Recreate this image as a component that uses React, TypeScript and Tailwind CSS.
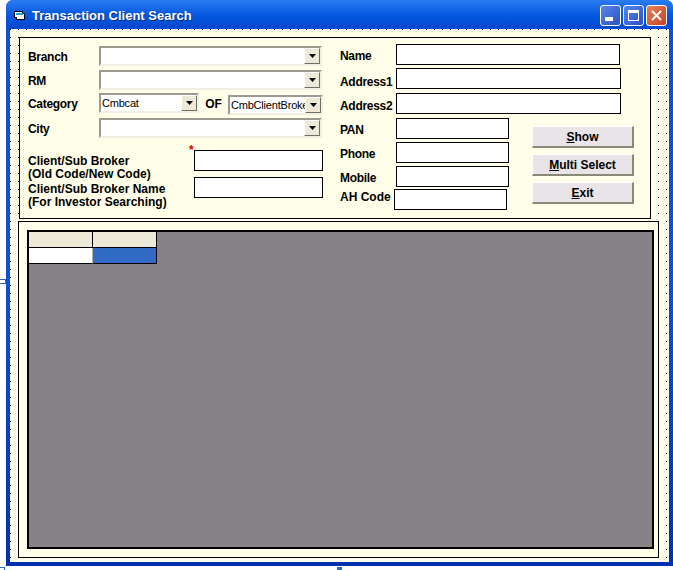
const font = "font-['Liberation_Sans',sans-serif]";

const Combo = ({ className, text }: { className: string; text?: string }) => (
  <div className={`${className} h-[20px] shrink-0 flex items-center bg-white border-2 border-t-[#9c9a8e] border-l-[#9c9a8e] border-r-[#f1efe2] border-b-[#f1efe2] overflow-hidden`}>
    <span className="flex-1 min-w-0 pl-[1px] text-[11px] tracking-[-0.2px] leading-none whitespace-nowrap overflow-hidden text-black">{text}</span>
    <div className="w-[16px] h-[16px] shrink-0 flex items-center justify-center bg-[#ece9d8] border border-t-white border-l-white border-r-[#716f64] border-b-[#716f64]">
      <svg width="7" height="4" viewBox="0 0 7 4">
        <path d="M0 0h7L3.5 4z" fill="#000" />
      </svg>
    </div>
  </div>
);

const Field = ({ className = "w-[113px]" }: { className?: string }) => (
  <div className={`${className} h-[21px] shrink-0 bg-white border border-black`} />
);

const Label = ({ children, className = "" }: { children: React.ReactNode; className?: string }) => (
  <div className={`text-[12px] leading-[14px] font-bold text-black whitespace-nowrap ${className}`}>{children}</div>
);

const FormButton = ({ hot, rest }: { hot: string; rest: string }) => (
  <button className="w-[102px] h-[22px] pt-[1px] bg-[#e8e4e8] border border-t-white border-l-white border-r-2 border-b-2 border-r-[#8a8878] border-b-[#8a8878] text-[12px] font-bold text-black leading-none">
    <span className="underline">{hot}</span>
    {rest}
  </button>
);

export default function App() {
  return (
    <div className={`${font} relative w-[673px] h-[570px] bg-white overflow-hidden`}>
      <div className="w-[667px] h-[566px] ml-[6px] flex flex-col rounded-t-[7px] overflow-hidden bg-gradient-to-b from-[#0a50d8] via-[#0a50d8] to-[#0030b0]">
        {/* title bar */}
        <div className="h-[29px] shrink-0 flex items-center pl-[8px] pr-[6px] pt-[1px] bg-gradient-to-b from-[#2a7cf0] via-[#0558e0] to-[#0348d0]">
          <svg width="12" height="12" viewBox="0 0 12 12" className="shrink-0 mt-[1px]">
            <path d="M.5 1.5h8v2h2v6h-8v-2h-2z" fill="#fff" stroke="#000" strokeWidth="1" />
            <path d="M2 3h7v2H2z" fill="#19a7c9" />
          </svg>
          <span className="ml-[6px] mt-[2px] text-[13px] font-bold text-white [text-shadow:1px_1px_0_#0a2a80]">Transaction Client Search</span>
          <div className="ml-auto flex gap-[2px]">
            <div className="w-[21px] h-[21px] rounded-[3px] border border-white bg-gradient-to-br from-[#5a86e8] to-[#2a50c8] flex items-end pl-[4px] pb-[4px]">
              <div className="w-[8px] h-[4px] bg-white" />
            </div>
            <div className="w-[21px] h-[21px] rounded-[3px] border border-white bg-gradient-to-br from-[#5a86e8] to-[#2a50c8] flex items-center justify-center">
              <div className="w-[11px] h-[11px] border border-white border-t-[3px]" />
            </div>
            <div className="w-[21px] h-[21px] rounded-[3px] border border-white bg-gradient-to-br from-[#e8805a] to-[#c8401c] flex items-center justify-center">
              <svg width="13" height="13" viewBox="0 0 13 13">
                <path d="M2 2l9 9M11 2l-9 9" stroke="#fff" strokeWidth="2" />
              </svg>
            </div>
          </div>
        </div>

        {/* client area */}
        <div className="mx-[4px] mb-[4px] flex-1 min-h-0 bg-[linear-gradient(to_right,transparent_1px,#fffee9_1px),linear-gradient(#000_1px,#fffee9_1px)] bg-[length:8px_8px] pt-[8px] pl-[9px]">
          {/* filter panel */}
          <div className="w-[632px] h-[182px] bg-[#fffee9] border border-black flex pl-[8px]">
            <div className="w-[312px] shrink-0 pt-[6px]">
              <div className="flex items-center h-[24px]">
                <Label className="w-[71px] mt-[2px] tracking-[-0.3px]">Branch</Label>
                <Combo className="w-[223px]" />
              </div>
              <div className="flex items-center h-[24px]">
                <Label className="w-[71px] mt-[2px] tracking-[-0.3px]">RM</Label>
                <Combo className="w-[223px]" />
              </div>
              <div className="flex items-center h-[24px]">
                <Label className="w-[71px] tracking-[-0.3px]">Category</Label>
                <Combo className="w-[100px] -mt-[2px]" text="Cmbcat" />
                <Label className="w-[29px] text-center">OF</Label>
                <Combo className="w-[95px] mt-[2px]" text="CmbClientBroke" />
              </div>
              <div className="flex items-center h-[24px]">
                <Label className="w-[71px] mt-[2px] tracking-[-0.3px]">City</Label>
                <Combo className="w-[223px]" />
              </div>
              <div className="flex mt-[10px]">
                <div className="w-[166px] pt-[5px] text-[12px] leading-[13px] font-bold text-black whitespace-nowrap">
                  <div>Client/Sub Broker<br />(Old Code/New Code)</div>
                  <div className="mt-[2px]">Client/Sub Broker Name<br />(For Investor Searching)</div>
                </div>
                <div className="relative flex flex-col gap-[6px]">
                  <span className="absolute -top-[6px] left-[-5px] text-[12px] font-bold leading-none text-[#e00000]">*</span>
                  <Field className="w-[129px]" />
                  <Field className="w-[129px]" />
                </div>
              </div>
            </div>

            <div className="pt-[6px]">
              <div className="flex items-center">
                <Label className="w-[56px] mt-[2px] tracking-[-0.3px]">Name</Label>
                <Field className="w-[224px]" />
              </div>
              <div className="flex items-center mt-[3px]">
                <Label className="w-[56px] mt-[6px] tracking-[-0.3px]">Address1</Label>
                <Field className="w-[225px]" />
              </div>
              <div className="flex items-center mt-[4px]">
                <Label className="w-[56px] mt-[4px] tracking-[-0.3px]">Address2</Label>
                <Field className="w-[225px]" />
              </div>
              <div className="flex mt-[4px]">
                <div>
                  <div className="flex items-center">
                    <Label className="w-[56px] mt-[3px] tracking-[-0.3px]">PAN</Label>
                    <Field />
                  </div>
                  <div className="flex items-center mt-[3px]">
                    <Label className="w-[56px] mt-[3px] tracking-[-0.3px]">Phone</Label>
                    <Field />
                  </div>
                  <div className="flex items-center mt-[3px]">
                    <Label className="w-[56px] mt-[3px] tracking-[-0.3px]">Mobile</Label>
                    <Field />
                  </div>
                  <div className="flex items-center mt-[2px]">
                    <Label className="w-[54px] -mt-[5px]">AH Code</Label>
                    <Field />
                  </div>
                </div>
                <div className="flex flex-col gap-[6px] pt-[8px] pl-[23px]">
                  <FormButton hot="S" rest="how" />
                  <FormButton hot="M" rest="ulti Select" />
                  <FormButton hot="E" rest="xit" />
                </div>
              </div>
            </div>
          </div>

          {/* grid panel */}
          <div className="w-[641px] h-[337px] mt-[2px] -ml-[1px] bg-[#fffee9] border border-black pt-[8px] pl-[8px] pr-[4px] pb-[8px]">
            <div className="h-full bg-[#858385] border-2 border-black">
              <div className="grid grid-cols-[64px_64px] grid-rows-[16px_16px] w-[128px]">
                <div className="bg-[#ece9d8] border-r border-b border-black" />
                <div className="bg-[#ece9d8] border-r border-b border-black" />
                <div className="bg-white border-r border-b border-r-[#b0b0b0] border-b-black" />
                <div className="bg-[#316ac5] border-r border-b border-black" />
              </div>
            </div>
          </div>
        </div>
      </div>

      {/* designer selection handles */}
      <div className="absolute left-[337px] top-[567px] w-[5px] h-[3px] bg-[#316ac5]" />
      <div className="absolute left-0 top-[567px] w-[5px] h-[3px] border-t border-r border-[#316ac5]" />
      <div className="absolute left-0 top-[279px] w-[6px] h-[5px] border border-l-0 border-[#316ac5]" />
    </div>
  );
}
